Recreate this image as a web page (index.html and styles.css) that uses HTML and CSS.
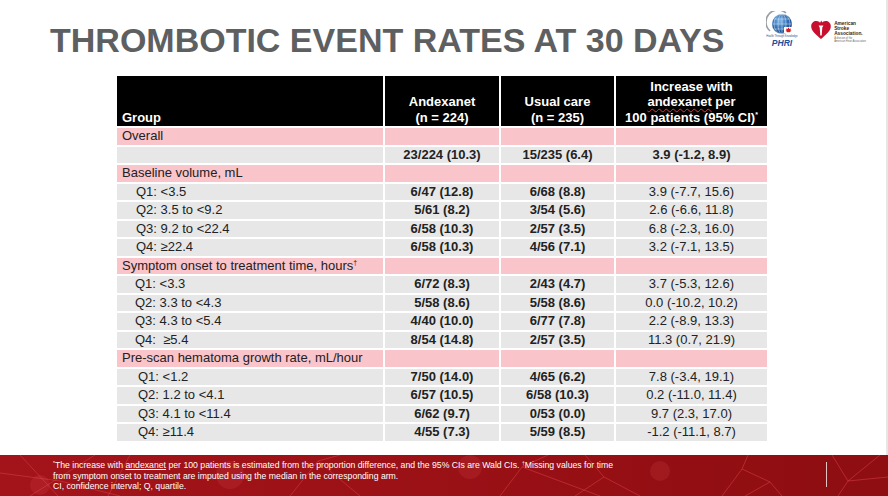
FILE: index.html
```html
<!DOCTYPE html>
<html lang="en">
<head>
<meta charset="utf-8">
<title>Thrombotic event rates at 30 days</title>
<link rel="stylesheet" href="styles.css">
</head>
<body>
<div class="slide">
  <header class="top">
    <h1 class="title">THROMBOTIC EVENT RATES AT 30 DAYS</h1>
    <div class="logos">
      <svg class="phri" width="32" height="36" viewBox="0 0 32 36">
        <defs>
          <radialGradient id="globe" cx="0.4" cy="0.35" r="0.7">
            <stop offset="0" stop-color="#7fb6e6"/>
            <stop offset="0.55" stop-color="#2f6fb6"/>
            <stop offset="1" stop-color="#0d3a78"/>
          </radialGradient>
        </defs>
        <path d="M4 20 A12 12 0 0 1 20 2" fill="none" stroke="#9a9ea4" stroke-width="1.6"/>
        <circle cx="16" cy="13" r="10" fill="url(#globe)"/>
        <g fill="none" stroke="#dfeaf6" stroke-width="0.5">
          <ellipse cx="16" cy="13" rx="4" ry="10"/>
          <ellipse cx="16" cy="13" rx="8" ry="10"/>
          <line x1="6" y1="13" x2="26" y2="13"/>
          <line x1="7.5" y1="8" x2="24.5" y2="8"/>
          <line x1="7.5" y1="18" x2="24.5" y2="18"/>
          <line x1="16" y1="3" x2="16" y2="23"/>
        </g>
        <rect x="18" y="16" width="9" height="6" fill="#fff"/>
        <path d="M22.5 16.3 L23.4 18 L25 17.5 L24.4 19.4 L25.6 19.8 L23 21.6 L22.5 20.8 L22 21.6 L19.4 19.8 L20.6 19.4 L20 17.5 L21.6 18 Z" fill="#d71920"/>
        <text x="16" y="26" class="phri-tag">Health Through Knowledge</text>
        <text x="16" y="35" class="phri-name">PHRI</text>
      </svg>
      <div class="aha">
        <svg class="heart" width="22" height="22" viewBox="0 0 22 22">
          <path d="M11 21 C6 16.5 1.2 13 1.2 8.2 C1.2 5 3.6 3 6.3 3 C8.4 3 10 4.2 11 5.8 C12 4.2 13.6 3 15.7 3 C18.4 3 20.8 5 20.8 8.2 C20.8 13 16 16.5 11 21 Z" fill="#c8102e"/>
          <path d="M8.6 7.6 L13.4 7.6 L12.3 9.6 L11.7 17.5 L10.3 17.5 L9.7 9.6 Z" fill="#fff"/>
          <path d="M10.4 7.2 C9.2 5.6 10.2 3.8 11.8 2.4 C11.4 3.8 12.8 4.6 12.3 6.2 C12 6.9 11.4 7.2 10.4 7.2 Z" fill="#c8102e"/>
        </svg>
        <div class="aha-text">
          <span class="aha-name">American<br>Stroke<br>Association.</span>
          <span class="aha-sub">A division of the<br>American Heart Association</span>
        </div>
      </div>
    </div>
  </header>

  <main class="content">
    <table class="data">
      <colgroup>
        <col class="c-group">
        <col class="c-num">
        <col class="c-num2">
        <col class="c-inc">
      </colgroup>
      <thead>
        <tr>
          <th class="h-group">Group</th>
          <th>Andexanet<br>(n = 224)</th>
          <th>Usual care<br>(n = 235)</th>
          <th>Increase with<br><span class="spell">andexanet</span> per<br>100 patients (95% CI)<sup class="sup">*</sup></th>
        </tr>
      </thead>
      <tbody>
        <tr class="sec"><td>Overall</td><td></td><td></td><td></td></tr>
        <tr class="row"><td></td><td class="b">23/224 (10.3)</td><td class="b">15/235 (6.4)</td><td class="b">3.9 (-1.2, 8.9)</td></tr>
        <tr class="sec"><td>Baseline volume, mL</td><td></td><td></td><td></td></tr>
        <tr class="row"><td class="q">Q1: &lt;3.5</td><td class="b">6/47 (12.8)</td><td class="b">6/68 (8.8)</td><td>3.9 (-7.7, 15.6)</td></tr>
        <tr class="row"><td class="q">Q2: 3.5 to &lt;9.2</td><td class="b">5/61 (8.2)</td><td class="b">3/54 (5.6)</td><td>2.6 (-6.6, 11.8)</td></tr>
        <tr class="row"><td class="q">Q3: 9.2 to &lt;22.4</td><td class="b">6/58 (10.3)</td><td class="b">2/57 (3.5)</td><td>6.8 (-2.3, 16.0)</td></tr>
        <tr class="row"><td class="q">Q4: ≥22.4</td><td class="b">6/58 (10.3)</td><td class="b">4/56 (7.1)</td><td>3.2 (-7.1, 13.5)</td></tr>
        <tr class="sec"><td>Symptom onset to treatment time, hours<sup class="sup">†</sup></td><td></td><td></td><td></td></tr>
        <tr class="row"><td class="q q-n">Q1: &lt;3.3</td><td class="b">6/72 (8.3)</td><td class="b">2/43 (4.7)</td><td>3.7 (-5.3, 12.6)</td></tr>
        <tr class="row"><td class="q q-n">Q2: 3.3 to &lt;4.3</td><td class="b">5/58 (8.6)</td><td class="b">5/58 (8.6)</td><td>0.0 (-10.2, 10.2)</td></tr>
        <tr class="row"><td class="q q-n">Q3: 4.3 to &lt;5.4</td><td class="b">4/40 (10.0)</td><td class="b">6/77 (7.8)</td><td>2.2 (-8.9, 13.3)</td></tr>
        <tr class="row"><td class="q q-n">Q4: &nbsp;≥5.4</td><td class="b">8/54 (14.8)</td><td class="b">2/57 (3.5)</td><td>11.3 (0.7, 21.9)</td></tr>
        <tr class="sec"><td>Pre-scan hematoma growth rate, mL/hour</td><td></td><td></td><td></td></tr>
        <tr class="row"><td class="q q-w">Q1: &lt;1.2</td><td class="b">7/50 (14.0)</td><td class="b">4/65 (6.2)</td><td>7.8 (-3.4, 19.1)</td></tr>
        <tr class="row"><td class="q q-w">Q2: 1.2 to &lt;4.1</td><td class="b">6/57 (10.5)</td><td class="b">6/58 (10.3)</td><td>0.2 (-11.0, 11.4)</td></tr>
        <tr class="row"><td class="q q-w">Q3: 4.1 to &lt;11.4</td><td class="b">6/62 (9.7)</td><td class="b">0/53 (0.0)</td><td>9.7 (2.3, 17.0)</td></tr>
        <tr class="row"><td class="q q-w">Q4: ≥11.4</td><td class="b">4/55 (7.3)</td><td class="b">5/59 (8.5)</td><td>-1.2 (-11.1, 8.7)</td></tr>
      </tbody>
    </table>
  </main>

  <footer class="foot">
    <svg class="net" width="888" height="41" viewBox="0 0 888 41" preserveAspectRatio="none">
      <g fill="none" stroke="#d23a44" stroke-opacity="0.6" stroke-width="1">
        <path d="M20 0 L58 41"/>
        <path d="M95 0 L30 41"/>
        <path d="M0 18 L60 26 L120 41"/>
        <path d="M130 0 L108 41"/>
        <path d="M290 41 L318 6 L340 0"/>
        <path d="M318 6 L360 41"/>
        <path d="M500 41 L522 12 L548 0"/>
        <path d="M522 12 L600 41"/>
        <path d="M585 0 L604 22 L640 41"/>
        <path d="M604 22 L575 41"/>
        <path d="M722 41 L742 14 L748 0"/>
        <path d="M742 14 L770 27 L782 41"/>
        <path d="M770 27 L745 41"/>
        <path d="M832 0 L848 26 L880 0"/>
        <path d="M848 26 L838 41"/>
        <path d="M848 26 L888 22"/>
      </g>
      <g fill="#ff6a70" fill-opacity="0.12">
        <circle cx="40" cy="30" r="10"/>
        <circle cx="230" cy="20" r="14"/>
        <circle cx="470" cy="12" r="12"/>
        <circle cx="660" cy="16" r="10"/>
      </g>
    </svg>
    <p class="notes"><sup class="fsup">*</sup>The increase with <span class="uline">andexanet</span> per 100 patients is estimated from the proportion difference, and the 95% CIs are Wald CIs. <sup class="fsup">†</sup>Missing values for time<br>from symptom onset to treatment are imputed using the median in the corresponding arm.<br>CI, confidence interval; Q, quartile.</p>
    <span class="vrule"></span>
  </footer>
</div>
</body>
</html>
```

FILE: styles.css
```css
* { box-sizing: border-box; }

html, body {
  margin: 0;
  padding: 0;
  background: #e6e6e6;
}

.slide {
  width: 888px;
  height: 496px;
  display: flex;
  flex-direction: column;
  font-family: "Liberation Sans", Arial, sans-serif;
  overflow: hidden;
}

.top {
  height: 76px;
  flex: none;
  display: flex;
  align-items: flex-start;
  background: #fff;
  margin-right: 2px;
}

.title {
  margin: 0;
  padding: 20px 0 0 50px;
  font-size: 34px;
  line-height: 40px;
  font-weight: bold;
  color: #5e5f61;
  white-space: nowrap;
}

.logos {
  margin-left: auto;
  margin-right: 20px;
  padding-top: 11px;
  display: flex;
  align-items: flex-start;
  gap: 12px;
}

.phri { display: block; }

.phri-tag {
  font-family: "Liberation Sans", Arial, sans-serif;
  font-size: 2.6px;
  fill: #2b4f8f;
  text-anchor: middle;
}

.phri-name {
  font-family: "Liberation Sans", Arial, sans-serif;
  font-size: 8.6px;
  font-weight: bold;
  font-style: italic;
  fill: #1d4f9e;
  text-anchor: middle;
}

.aha {
  display: flex;
  align-items: flex-start;
  gap: 2px;
  padding-top: 7px;
}

.heart { display: block; }

.aha-text {
  display: flex;
  flex-direction: column;
  padding-top: 3px;
}

.aha-name {
  font-size: 4.8px;
  line-height: 5px;
  font-weight: bold;
  color: #2a2a2a;
}

.aha-sub {
  margin-top: 1px;
  font-size: 2.6px;
  line-height: 3px;
  color: #6a6a6a;
  white-space: nowrap;
}

.content {
  flex: 1;
  background: #fff;
  margin-right: 2px;
  padding-left: 115px;
}

.data {
  border-collapse: separate;
  border-spacing: 2px 2px;
  table-layout: fixed;
  width: 654px;
  margin-top: -2px;
  font-size: 13px;
  color: #222;
}

.c-group { width: 266px; }
.c-num { width: 114px; }
.c-num2 { width: 113px; }
.c-inc { width: 151px; }

.data th {
  background: #000;
  color: #fff;
  font-weight: bold;
  height: 50px;
  padding: 0 0 1px;
  line-height: 15.5px;
  vertical-align: bottom;
  text-align: center;
  white-space: nowrap;
}

.data th.h-group {
  text-align: left;
  padding-left: 5px;
}

.spell {
  text-decoration: underline wavy #e0353f;
  text-decoration-thickness: 1px;
  text-underline-offset: 2px;
}

.sup {
  font-size: 7px;
  vertical-align: 5px;
  line-height: 0;
}

.data td {
  height: 16.5px;
  padding: 0 0 1px;
  line-height: 15.5px;
  text-align: center;
  white-space: nowrap;
  background: #e7e7e7;
}

.data .sec td {
  background: #f9c4ca;
}

.data td:first-child {
  text-align: left;
  padding-left: 5px;
}

.data td.q { padding-left: 19px; }
.data td.q-n { padding-left: 18px; }
.data td.q-w { padding-left: 21px; }

.data td.b { font-weight: bold; }

.foot {
  position: relative;
  height: 41px;
  flex: none;
  background: linear-gradient(90deg, #a3141a 0%, #9b1116 45%, #920e12 80%, #8e0e11 100%);
  overflow: hidden;
}

.net {
  position: absolute;
  left: 0;
  top: 0;
}

.notes {
  position: relative;
  margin: 0;
  padding: 5px 0 0 53px;
  font-size: 8.7px;
  line-height: 10.5px;
  color: #fff;
  white-space: nowrap;
}

.fsup {
  font-size: 5px;
  vertical-align: 3px;
  line-height: 0;
}

.uline {
  text-decoration: underline;
  text-decoration-thickness: 0.5px;
  text-underline-offset: 1px;
}

.vrule {
  position: absolute;
  left: 826px;
  top: 7px;
  width: 1px;
  height: 25px;
  background: rgba(255, 255, 255, 0.75);
}
```
